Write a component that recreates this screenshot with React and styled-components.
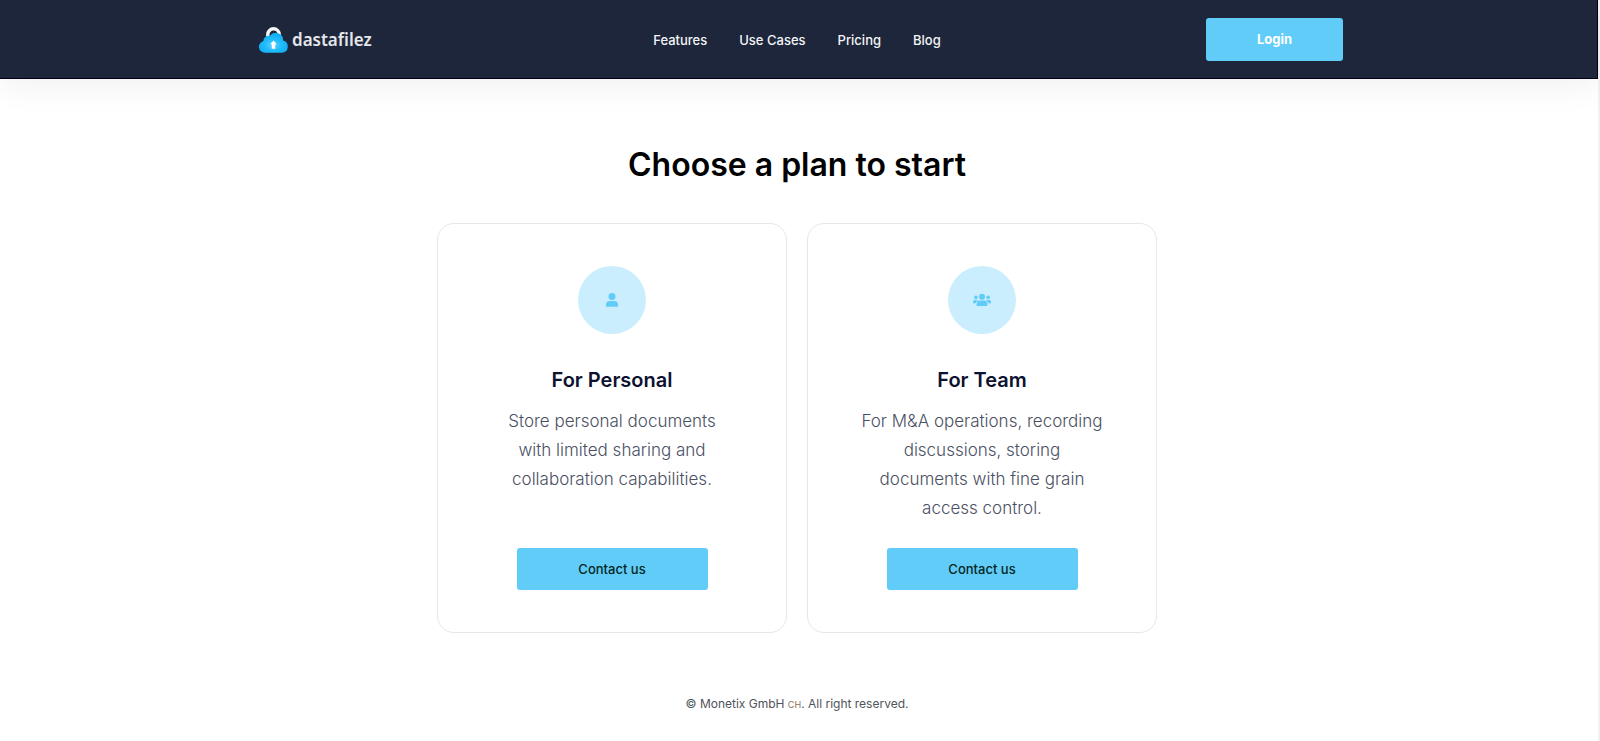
import React from 'react';
import styled, { createGlobalStyle } from 'styled-components';

const plans = [
    {
        id: 'personal',
        title: 'For Personal',
        text: 'Store personal documents with limited sharing and collaboration capabilities.',
        icon: UserIcon,
    },
    {
        id: 'team',
        title: 'For Team',
        text: 'For M&A operations, recording discussions, storing documents with fine grain access control.',
        icon: TeamIcon,
    },
];

function App() {
    return (
        <>
            <GlobalStyle/>
            <StyledPage>
                <StyledHeader>
                    <StyledContainer>
                        <StyledLogo href='#'>
                            <CloudLock/>
                            <span>dastafilez</span>
                        </StyledLogo>
                        <StyledNav>
                            <a href='#features'>Features</a>
                            <a href='#use-cases'>Use Cases</a>
                            <a href='#pricing'>Pricing</a>
                            <a href='#blog'>Blog</a>
                        </StyledNav>
                        <StyledActions>
                            <StyledLogin type='button'>Login</StyledLogin>
                        </StyledActions>
                    </StyledContainer>
                </StyledHeader>
                <StyledMain>
                    <h1>Choose a plan to start</h1>
                    <StyledCards>
                        {plans.map(({ id, title, text, icon: Icon }) => (
                            <StyledCard key={id}>
                                <StyledIcon>
                                    <Icon/>
                                </StyledIcon>
                                <h2>{title}</h2>
                                <p>{text}</p>
                                <StyledContact type='button'>Contact us</StyledContact>
                            </StyledCard>
                        ))}
                    </StyledCards>
                </StyledMain>
                <StyledFooter>
                    © Monetix GmbH <small>CH</small>. All right reserved.
                </StyledFooter>
            </StyledPage>
        </>
    );
}

// Icons
function CloudLock() {
    return (
        <svg width='29' height='26' viewBox='0 0 29 26' aria-hidden='true'>
            <defs>
                <radialGradient id='cloud' cx='0.5' cy='0.6' r='0.6'>
                    <stop offset='0' stopColor='#5fd4ff'/>
                    <stop offset='0.5' stopColor='#1fbcfb'/>
                    <stop offset='1' stopColor='#0fa9f2'/>
                </radialGradient>
            </defs>
            <path d='M8.800 12V7.500a5.700 5.700 0 0 1 11.400 0V12' fill='none' stroke='#f6f6f6' strokeWidth='3.400'/>
            <path
                d='M6 25.800a6 6 0 0 1-1.600-11.800 5 5 0 0 1 6.300-5 7.400 7.400 0 0 1 13.400 4.600 6.200 6.200 0 0 1-1.300 12.200z'
                fill='url(#cloud)'
            />
            <path d='M14.500 13.500l3.200 3.700h-1.400v4.500h-3.600v-4.500h-1.400z' fill='#fff'/>
        </svg>
    );
}

function UserIcon() {
    return (
        <svg width='12' height='14' viewBox='0 0 12 14' aria-hidden='true'>
            <circle cx='6' cy='3.500' r='3.500'/>
            <path d='M0 13.800v-1.800a4 4 0 0 1 4-4h4a4 4 0 0 1 4 4v1.800z'/>
        </svg>
    );
}

function TeamIcon() {
    return (
        <svg width='18' height='14' viewBox='0 0 18 14' aria-hidden='true'>
            <circle cx='9' cy='3.800' r='3'/>
            <circle cx='2.900' cy='4.200' r='1.800'/>
            <circle cx='15.100' cy='4.200' r='1.800'/>
            <path d='M3.600 13v-2.100a3.300 3.300 0 0 1 3.300-3.300h4.200a3.300 3.300 0 0 1 3.300 3.300v2.100z'/>
            <path d='M0 10.300V9a2.200 2.200 0 0 1 2.200-2.200H4a2 2 0 0 1 .7.200A4.500 4.500 0 0 0 2.800 10.300z'/>
            <path d='M18 10.300V9a2.200 2.200 0 0 0-2.200-2.200H14a2 2 0 0 0-.7.200A4.500 4.500 0 0 1 15.200 10.300z'/>
        </svg>
    );
}

// Styles
const GlobalStyle = createGlobalStyle`
  *{
    box-sizing: border-box;
  }
  body{
    margin: 0;
    background: #fff;
    font-family: Inter, "Liberation Sans", sans-serif;
  }
`

const StyledPage = styled.div`
  display: flex;
  flex-direction: column;
  min-height: 100vh;
  border-right: 2px solid #f1f1f1;
`

const StyledHeader = styled.header`
  background: #1e263b;
  border-right: 1px solid #000012;
  border-bottom: 1px solid #000012;
  padding: 18px 3px 17px 0;
  box-shadow: 0 10px 30px rgba(0, 0, 0, 0.05);
`

const StyledContainer = styled.div`
  display: grid;
  grid-template-columns: 1fr auto 1fr;
  align-items: center;
  max-width: 1092px;
  margin: 0 auto;
`

const StyledLogo = styled.a`
  display: flex;
  align-items: center;
  gap: 4px;
  padding-left: 8px;
  color: #e4e6ea;
  font-family: "Noto Sans", sans-serif;
  font-size: 17px;
  font-weight: 600;
  line-height: 24px;
  text-decoration: none;
`

const StyledNav = styled.nav`
  display: flex;
  gap: 32px;
  a{
    color: #f4f5f7;
    font-size: 13px;
    font-weight: 500;
    line-height: 20px;
    text-decoration: none;
  }
`

const StyledActions = styled.div`
  display: flex;
  justify-content: flex-end;
`

const StyledButton = styled.button`
  border: 0;
  border-radius: 3px;
  background: #61ccf7;
  font-family: inherit;
  font-size: 13px;
  line-height: 20px;
  cursor: pointer;
`

const StyledLogin = styled(StyledButton)`
  min-width: 137px;
  padding: 11px 24px 12px;
  color: #fff;
  font-weight: 700;
`

const StyledContact = styled(StyledButton)`
  width: 191px;
  margin-top: auto;
  padding: 11px 24px;
  color: #04261f;
  font-weight: 500;
`

const StyledMain = styled.main`
  padding: 65px 6px 0 2px;
  h1{
    margin: 0 0 37px;
    color: #000;
    font-size: 32px;
    font-weight: 600;
    line-height: 42px;
    text-align: center;
  }
`

const StyledCards = styled.div`
  display: flex;
  flex-wrap: wrap;
  justify-content: center;
  gap: 20px;
`

const StyledCard = styled.section`
  display: flex;
  flex-direction: column;
  align-items: center;
  width: 350px;
  border: 1px solid #e6e7e9;
  border-radius: 17px;
  padding: 42px 52px;
  text-align: center;
  h2{
    margin: 31px 0 12px;
    color: #0c1230;
    font-size: 20px;
    font-weight: 600;
    line-height: 30px;
  }
  p{
    margin: 0 0 25px;
    color: #4a5064;
    font-size: 17px;
    font-weight: 300;
    line-height: 29px;
  }
`

const StyledIcon = styled.div`
  display: flex;
  align-items: center;
  justify-content: center;
  width: 68px;
  height: 68px;
  border-radius: 50%;
  background: #caeefd;
  svg{
    fill: #61ccf7;
  }
`

const StyledFooter = styled.footer`
  padding: 61px 6px 28px 2px;
  color: #50535a;
  font-size: 12px;
  line-height: 20px;
  text-align: center;
  small{
    color: #8a705f;
    font-size: 9px;
  }
`

export default App;
